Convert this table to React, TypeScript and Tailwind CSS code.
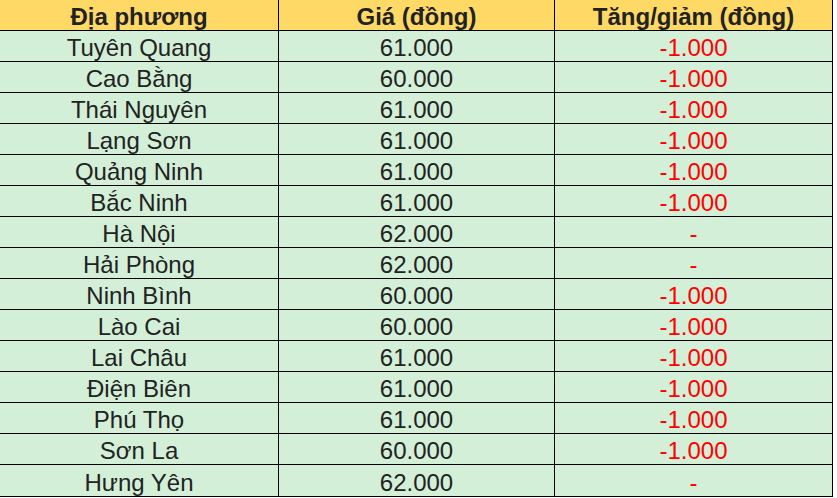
const ROWS = [
  { place: 'Tuyên Quang', price: '61.000', change: '-1.000' },
  { place: 'Cao Bằng', price: '60.000', change: '-1.000' },
  { place: 'Thái Nguyên', price: '61.000', change: '-1.000' },
  { place: 'Lạng Sơn', price: '61.000', change: '-1.000' },
  { place: 'Quảng Ninh', price: '61.000', change: '-1.000' },
  { place: 'Bắc Ninh', price: '61.000', change: '-1.000' },
  { place: 'Hà Nội', price: '62.000', change: '-' },
  { place: 'Hải Phòng', price: '62.000', change: '-' },
  { place: 'Ninh Bình', price: '60.000', change: '-1.000' },
  { place: 'Lào Cai', price: '60.000', change: '-1.000' },
  { place: 'Lai Châu', price: '61.000', change: '-1.000' },
  { place: 'Điện Biên', price: '61.000', change: '-1.000' },
  { place: 'Phú Thọ', price: '61.000', change: '-1.000' },
  { place: 'Sơn La', price: '60.000', change: '-1.000' },
  { place: 'Hưng Yên', price: '62.000', change: '-' },
]

export default function App() {
  return (
    <div className="w-[837px] h-[498px] bg-white overflow-hidden" style={{ fontFamily: '"Liberation Sans", Arial, sans-serif' }}>
      <div className="w-[833px] border-r border-b border-black">
        <div className="grid grid-cols-[279px_276px_277px] h-[31px] bg-[#ffd966] border-b border-black text-[24px] leading-none font-bold text-[#222]">
          <div className="flex items-center justify-center pt-[4px] border-r border-black">Địa phương</div>
          <div className="flex items-center justify-center pt-[4px] border-r border-black">Giá (đồng)</div>
          <div className="flex items-center justify-center pt-[4px]">Tăng/giảm (đồng)</div>
        </div>
        {ROWS.map((r, i) => (
          <div
            key={r.place}
            className={`grid grid-cols-[279px_276px_277px] h-[31px] bg-[#d3efd8] text-[24px] leading-none text-[#222] ${i < ROWS.length - 1 ? 'border-b border-black' : ''}`}
          >
            <div className="flex items-center justify-center pt-[4px] border-r border-black">{r.place}</div>
            <div className="flex items-center justify-center pt-[4px] border-r border-black">{r.price}</div>
            <div className="flex items-center justify-center pt-[4px] text-[#ff0000]">{r.change}</div>
          </div>
        ))}
      </div>
    </div>
  )
}
